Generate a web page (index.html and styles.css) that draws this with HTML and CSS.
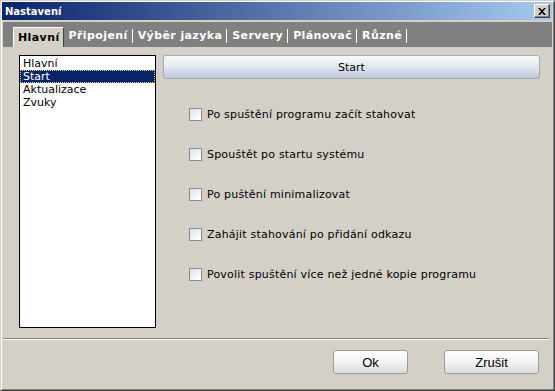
FILE: index.html
```html
<!DOCTYPE html>
<html>
<head>
  <meta charset="UTF-8">
  <title>Nastavení</title>
  <link rel="stylesheet" href="styles.css">
</head>
<body>
  <div class="window">
    <!-- titulek okna -->
    <div class="title-bar">
      <div class="title-bar-text">Nastavení</div>
      <div class="close-button">
        <svg width="8" height="7" viewBox="0 0 8 7"><path d="M0 0h2l2 2.3L6 0h2L5 3.5 8 7H6L4 4.7 2 7H0l3-3.5z" fill="#000"/></svg>
      </div>
    </div>

    <!-- záložky -->
    <div class="tabs">
      <div class="tab active">Hlavní</div>
      <div class="tab"><span>Připojení</span></div>
      <div class="tab"><span>Výběr jazyka</span></div>
      <div class="tab"><span>Servery</span></div>
      <div class="tab"><span>Plánovač</span></div>
      <div class="tab"><span>Různé</span></div>
    </div>

    <div class="content">
      <div class="list-box">
        <div class="list-item">Hlavní</div>
        <div class="list-item selected">Start</div>
        <div class="list-item">Aktualizace</div>
        <div class="list-item">Zvuky</div>
      </div>

      <div class="page">
        <div class="page-header">Start</div>
        <div class="options">
          <label class="option"><span class="check"></span>Po spuštění programu začít stahovat</label>
          <label class="option"><span class="check"></span>Spouštět po startu systému</label>
          <label class="option"><span class="check"></span>Po puštění minimalizovat</label>
          <label class="option"><span class="check"></span>Zahájit stahování po přidání odkazu</label>
          <label class="option"><span class="check"></span>Povolit spuštění více než jedné kopie programu</label>
        </div>
      </div>
    </div>

    <div class="separator"></div>

    <div class="footer">
      <button class="button ok-button">Ok</button>
      <button class="button cancel-button">Zrušit</button>
    </div>
  </div>
</body>
</html>
```

FILE: styles.css
```css
body {
  margin: 0;
  padding: 0;
  background-color: #d4d0c8;
  font-family: "DejaVu Sans", Verdana, sans-serif;
  font-size: 11px;
  color: #000;
}

.window {
  width: 555px;
  height: 391px;
  box-sizing: border-box;
  border: 1px solid;
  border-color: #d4d0c8 #404040 #404040 #d4d0c8;
  box-shadow: inset 1px 1px #fff, inset -1px -1px #808080;
  padding: 1px;
  display: flex;
  flex-direction: column;
  background-color: #d4d0c8;
}

/* titulek */
.title-bar {
  height: 18px;
  margin-right: 1px;
  display: flex;
  justify-content: space-between;
  align-items: center;
  background: linear-gradient(to right, #0a246a, #a6caf0);
  user-select: none;
}

.title-bar-text {
  padding-left: 3px;
  color: #fff;
  font-weight: bold;
  font-size: 10px;
}

.close-button {
  width: 16px;
  height: 14px;
  margin-right: 2px;
  box-sizing: border-box;
  display: flex;
  justify-content: center;
  align-items: center;
  background-color: #d4d0c8;
  border: 1px solid;
  border-color: #fff #404040 #404040 #fff;
  box-shadow: inset -1px -1px #808080;
}

/* záložky */
.tabs {
  height: 25px;
  margin: 2px 1px 0 1px;
  padding-left: 10px;
  display: flex;
  align-items: flex-end;
  background-color: #808080;
  font-weight: bold;
  letter-spacing: 0.4px;
}

.tab {
  height: 20px;
  display: flex;
  align-items: center;
  color: #fff;
}

.tab span {
  padding: 0 4px 0 5px;
  line-height: 14px;
  border-right: 1px solid #fff;
  margin-bottom: 2px;
}

.tab.active {
  box-sizing: border-box;
  padding: 0 3px 0 4px;
  color: #000;
  background-color: #d4d0c8;
  border-top: 1px solid #fff;
  border-left: 1px solid #fff;
  border-right: 1px solid #404040;
}

/* obsah */
.content {
  display: flex;
  gap: 7px;
  margin-top: 8px;
  padding-left: 17px;
}

.list-box {
  width: 137px;
  height: 273px;
  box-sizing: border-box;
  padding: 1px 0 0 0;
  background-color: #fff;
  border: 1px solid #000;
}

.list-item {
  height: 13px;
  line-height: 13px;
  padding-left: 3px;
  box-sizing: border-box;
}

.list-item.selected {
  background-color: #0a246a;
  color: #fff;
  outline: 1px dotted #e8d878;
  outline-offset: -1px;
}

.page {
  width: 377px;
}

.page-header {
  height: 24px;
  box-sizing: border-box;
  display: flex;
  justify-content: center;
  align-items: center;
  border: 1px solid #a4a8b0;
  border-radius: 3px;
  background: linear-gradient(to bottom, #f8f9fb, #e6eaf1 45%, #bcc7d8);
}

.options {
  display: flex;
  flex-direction: column;
  gap: 27px;
  margin-top: 29px;
  padding-left: 26px;
}

.option {
  height: 13px;
  display: flex;
  align-items: center;
  gap: 5px;
  letter-spacing: 0.2px;
}

.check {
  width: 13px;
  height: 13px;
  box-sizing: border-box;
  border: 1px solid #8c8c8c;
  background: linear-gradient(135deg, #d6dce6, #f4f6f9 60%, #fff);
}

/* spodní část */
.separator {
  margin: 10px 4px 0 1px;
  border-top: 1px solid #808080;
  border-bottom: 1px solid #fff;
}

.footer {
  display: flex;
  justify-content: flex-end;
  gap: 36px;
  margin-top: 10px;
  padding-right: 14px;
}

.button {
  height: 24px;
  box-sizing: border-box;
  border: 1px solid #9c9c9c;
  border-radius: 3px;
  background: linear-gradient(to bottom, #ffffff, #f2f2f2 50%, #dcdcdc);
  font-family: "Liberation Sans", Arial, sans-serif;
  font-size: 13px;
  color: #000;
  padding: 0;
}

.ok-button {
  width: 75px;
}

.cancel-button {
  width: 95px;
}
```
